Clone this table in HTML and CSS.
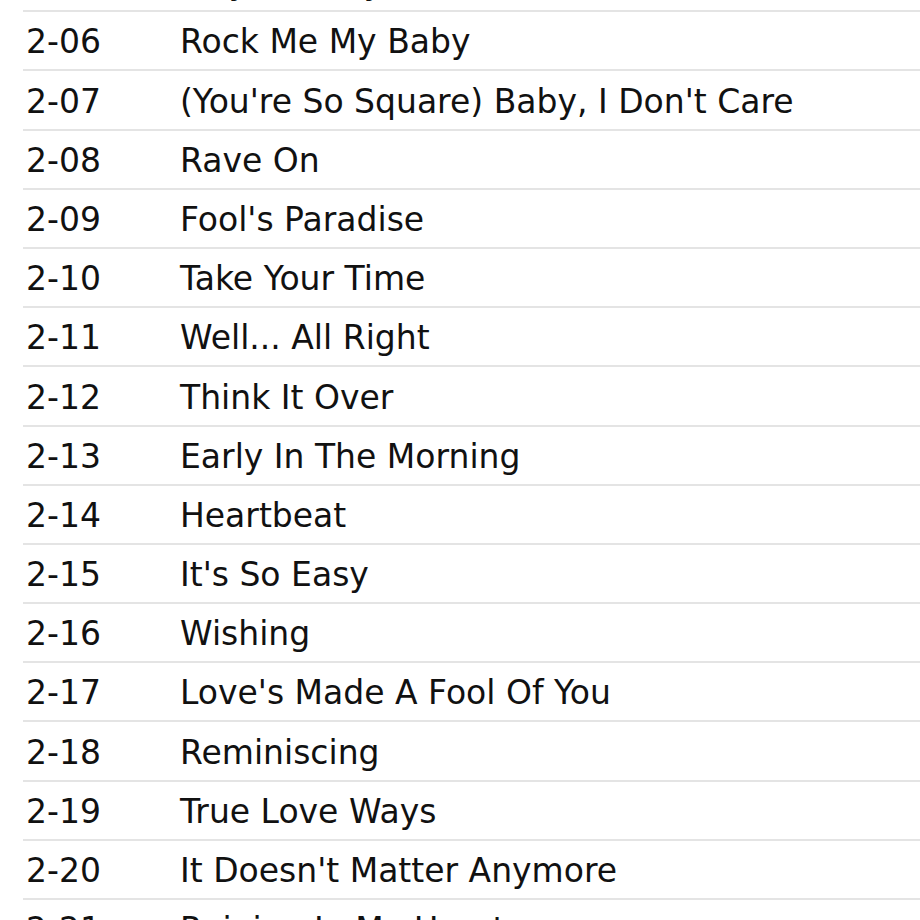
FILE: index.html
```html
<!DOCTYPE html>
<html lang="en">
<head>
  <meta charset="UTF-8" />
  <title>Tracks</title>
  <link rel="stylesheet" href="styles.css">
</head>
<body>
<div class="tracklist">
  <div class="track"><span class="num">2-05</span><span class="title">Maybe Baby</span></div>
  <div class="track"><span class="num">2-06</span><span class="title">Rock Me My Baby</span></div>
  <div class="track"><span class="num">2-07</span><span class="title">(You're So Square) Baby, I Don't Care</span></div>
  <div class="track"><span class="num">2-08</span><span class="title">Rave On</span></div>
  <div class="track"><span class="num">2-09</span><span class="title">Fool's Paradise</span></div>
  <div class="track"><span class="num">2-10</span><span class="title">Take Your Time</span></div>
  <div class="track"><span class="num">2-11</span><span class="title">Well... All Right</span></div>
  <div class="track"><span class="num">2-12</span><span class="title">Think It Over</span></div>
  <div class="track"><span class="num">2-13</span><span class="title">Early In The Morning</span></div>
  <div class="track"><span class="num">2-14</span><span class="title">Heartbeat</span></div>
  <div class="track"><span class="num">2-15</span><span class="title">It's So Easy</span></div>
  <div class="track"><span class="num">2-16</span><span class="title">Wishing</span></div>
  <div class="track"><span class="num">2-17</span><span class="title">Love's Made A Fool Of You</span></div>
  <div class="track"><span class="num">2-18</span><span class="title">Reminiscing</span></div>
  <div class="track"><span class="num">2-19</span><span class="title">True Love Ways</span></div>
  <div class="track"><span class="num">2-20</span><span class="title">It Doesn't Matter Anymore</span></div>
  <div class="track"><span class="num">2-21</span><span class="title">Raining In My Heart</span></div>
</div>
</body>
</html>
```

FILE: styles.css
```css
html, body {
  margin: 0;
  padding: 0;
  background: #ffffff;
  overflow: hidden;
}
body {
  height: 920px;
}
.tracklist {
  margin: -47px 0 0 23px;
  font-family: "DejaVu Sans", "Liberation Sans", sans-serif;
  font-size: 33px;
  color: #111111;
}
.track {
  display: flex;
  align-items: flex-end;
  height: 57.2px;
  border-bottom: 2px solid #e4e4e4;
  padding-left: 3px;
  white-space: nowrap;
}
.num {
  width: 154px;
  line-height: 1;
  padding-bottom: 11px;
}
.title {
  line-height: 1;
  padding-bottom: 11px;
}
```
